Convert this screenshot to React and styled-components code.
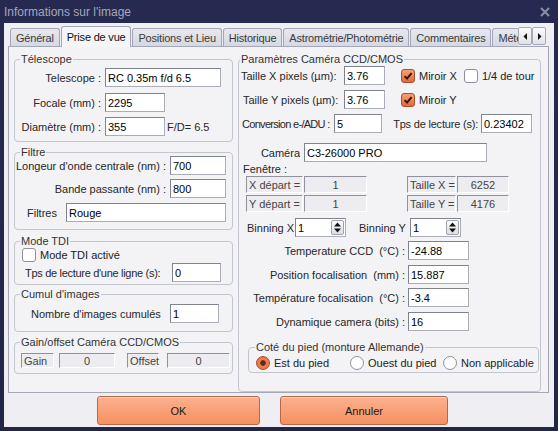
import React from 'react';
import styled, { createGlobalStyle } from 'styled-components';

const FONT = '"Liberation Sans", Arial, sans-serif';

const GlobalStyle = createGlobalStyle`
  * { box-sizing: border-box; }
  html, body { margin: 0; padding: 0; background: #24274c; }
  body { font-family: ${FONT}; font-size: 11px; color: #1e1e1e; }
`;

const Window = styled.div`
  width: 558px;
  height: 431px;
  display: flex;
  flex-direction: column;
  padding: 0 4px 4px;
  background: linear-gradient(180deg, #262a50 0%, #22254a 100%);
`;

const TitleBar = styled.div`
  height: 23px;
  flex-shrink: 0;
  display: flex;
  align-items: center;
  justify-content: space-between;
  padding-right: 4px;
`;

const Title = styled.span`
  font-size: 12px;
  color: #a5a7bf;
`;

const Client = styled.div`
  flex: 1;
  display: flex;
  flex-direction: column;
  padding: 2px 5px 2px 4px;
  background: #efeff3;
`;

const TabStrip = styled.div`
  height: 21px;
  flex-shrink: 0;
  display: flex;
`;

const TabList = styled.div`
  flex: 1;
  height: 22px;
  margin-bottom: -1px;
  padding-left: 2px;
  display: flex;
  align-items: flex-end;
  gap: 1px;
  overflow: hidden;
  position: relative;
  z-index: 1;
`;

const Tab = styled.div`
  flex-shrink: 0;
  height: ${p => (p.$active ? 21 : 18)}px;
  margin-bottom: ${p => (p.$active ? 0 : 1)}px;
  padding: 0 5px;
  display: flex;
  align-items: center;
  border: 1px solid #a2a6b6;
  border-bottom: none;
  border-radius: 3px 3px 0 0;
  background: ${p => (p.$active ? '#f5f5f8' : 'linear-gradient(180deg, #e7e8ef 0%, #d6d8e2 100%)')};
  color: ${p => (p.$active ? '#111' : '#3a3a3a')};
  letter-spacing: -0.2px;
  white-space: nowrap;
`;

const TabArrows = styled.div`
  align-self: flex-end;
  display: flex;
  margin: 0 3px 1px 0;
`;

const ArrowBtn = styled.span`
  width: 14px;
  height: 18px;
  display: flex;
  align-items: center;
  justify-content: center;
  border: 1px solid #a6aab8;
  border-radius: 2px;
  background: linear-gradient(180deg, #fafafc 0%, #e2e3ea 100%);
`;

const Panel = styled.div`
  height: 347px;
  flex-shrink: 0;
  display: flex;
  gap: 5px;
  padding: 12px 7px 0 5px;
  border: 1px solid #a3a7b6;
  background: #f3f3f6;
`;

const Column = styled.div`
  width: 219px;
  display: flex;
  flex-direction: column;
`;

const Group = styled.div`
  position: relative;
  flex-shrink: 0;
  width: ${p => (p.$w ? `${p.$w}px` : 'auto')};
  margin: ${p => p.$m || '0'};
  padding: ${p => p.$pad};
  border: 1px solid #c3c5cf;
  border-radius: 4px;
`;

const Legend = styled.span`
  position: absolute;
  top: -7px;
  left: ${p => p.$l ?? 5}px;
  padding: 0 1px;
  line-height: 13px;
  background: #f3f3f6;
  color: #333;
  white-space: nowrap;
`;

const Row = styled.div`
  display: flex;
  align-items: center;
  height: ${p => p.$h || 19}px;
  margin-top: ${p => p.$mt || 0}px;
  padding-left: ${p => p.$pl || 0}px;
`;

const Label = styled.span`
  flex-shrink: 0;
  width: ${p => (p.$w ? `${p.$w}px` : 'auto')};
  margin-left: ${p => p.$ml || 0}px;
  padding-left: ${p => p.$pl || 0}px;
  padding-right: ${p => p.$pr || 0}px;
  text-align: ${p => p.$align || 'right'};
  letter-spacing: ${p => p.$ls || 0}px;
  white-space: pre;
  color: #272727;
`;

const Field = styled.input.attrs({ type: 'text', readOnly: true })`
  flex-shrink: 0;
  width: ${p => p.$w}px;
  height: 19px;
  margin: 0 0 0 ${p => p.$ml || 0}px;
  padding: 0 2px;
  border: 1px solid #7e838f;
  border-right-color: #a9adb7;
  border-bottom-color: #a9adb7;
  background: #fff;
  font: 11px ${FONT};
  color: #000;
  outline: none;
`;

const Sunken = styled.div`
  flex-shrink: 0;
  width: ${p => p.$w}px;
  height: ${p => p.$h || 17}px;
  margin-left: ${p => p.$ml || 0}px;
  padding: 0 2px;
  display: flex;
  align-items: center;
  justify-content: ${p => (p.$center ? 'center' : 'flex-start')};
  border: 1px solid;
  border-color: #8f929c #ffffff #ffffff #8f929c;
  background: #ededf1;
  color: #444;
  white-space: nowrap;
`;

const CheckItem = styled.span`
  display: flex;
  align-items: center;
  gap: 4px;
  margin-left: ${p => p.$ml || 0}px;
  color: #222;
  white-space: nowrap;
`;

const Box = styled.span`
  width: 14px;
  height: 14px;
  flex-shrink: 0;
  display: flex;
  align-items: center;
  justify-content: center;
  border-radius: 3px;
  border: 1px solid ${p => (p.$on ? '#a9522f' : '#8d919d')};
  background: ${p => (p.$on ? 'linear-gradient(180deg, #f7a071 0%, #e2693d 100%)' : '#fff')};
`;

const Options = styled.div`
  display: flex;
  align-items: center;
  height: 15px;
`;

const Option = styled.span`
  width: ${p => (p.$w ? `${p.$w}px` : 'auto')};
  display: flex;
  align-items: center;
  gap: 4px;
  white-space: nowrap;
  color: #222;
`;

const Radio = styled.span`
  width: 14px;
  height: 14px;
  flex-shrink: 0;
  border-radius: 50%;
  border: 1px solid ${p => (p.$on ? '#a4502f' : '#8d919d')};
  background: ${p => (p.$on ? 'radial-gradient(circle, #6b2811 0 2.4px, #ef8456 3.2px, #df683c 100%)' : '#fff')};
`;

const Spin = styled.div`
  flex-shrink: 0;
  width: 51px;
  height: 19px;
  margin-left: ${p => p.$ml || 0}px;
  padding: 0 1px 0 2px;
  display: flex;
  align-items: center;
  border: 1px solid #7e838f;
  border-right-color: #a9adb7;
  border-bottom-color: #a9adb7;
  background: #fff;
  color: #000;
`;

const SpinValue = styled.span`
  flex: 1;
`;

const SpinButton = styled.span`
  width: 13px;
  height: 15px;
  display: flex;
  align-items: center;
  justify-content: center;
  border: 1px solid #9ea2ad;
  border-radius: 2px;
  background: linear-gradient(180deg, #fbfbfc 0%, #dcdee4 100%);
`;

const ButtonRow = styled.div`
  height: 29px;
  flex-shrink: 0;
  margin-top: 3px;
  padding-left: 89px;
  display: flex;
  gap: 20px;
`;

const Button = styled.button`
  width: ${p => p.$w}px;
  height: 29px;
  padding: 0;
  border: 1px solid #b8684a;
  border-radius: 3px;
  background: linear-gradient(180deg, #fcb190 0%, #f6905f 100%);
  box-shadow: inset 0 1px 0 rgba(255, 255, 255, 0.45);
  font: 11px ${FONT};
  color: #1a1a1a;
`;

const CloseIcon = () => (
  <svg width="10" height="10" viewBox="0 0 10 10">
    <path d="M1 1 L9 9 M9 1 L1 9" stroke="#8b8da7" strokeWidth="2" />
  </svg>
);

const Arrow = ({ dir }) => (
  <svg width="5" height="7" viewBox="0 0 5 7">
    <polygon points={dir === 'left' ? '4,0 0.5,3.5 4,7' : '1,0 4.5,3.5 1,7'} fill="#111" />
  </svg>
);

const SpinArrows = () => (
  <svg width="9" height="13" viewBox="0 0 9 13">
    <polygon points="1,5.5 8,5.5 4.5,1.5" fill="#111" />
    <polygon points="1,7.5 8,7.5 4.5,11.5" fill="#111" />
  </svg>
);

const CheckBox = ({ on }) => (
  <Box $on={on}>
    {on && (
      <svg width="10" height="10" viewBox="0 0 10 10">
        <path d="M1.6 5.2 L4 7.6 L8.6 2.2" stroke="#2e160b" strokeWidth="1.9" fill="none" />
      </svg>
    )}
  </Box>
);

const SpinBox = ({ value, ml }) => (
  <Spin $ml={ml}>
    <SpinValue>{value}</SpinValue>
    <SpinButton><SpinArrows /></SpinButton>
  </Spin>
);

const tabs = ['Général', 'Prise de vue', 'Positions et Lieu', 'Historique', 'Astrométrie/Photométrie', 'Commentaires', 'Météo'];

const focusRows = [
  ['Temperature CCD  (°C) :', '-24.88', 4],
  ['Position focalisation  (mm) :', '15.887', 5],
  ['Température focalisation  (°C) :', '-3.4', 4],
  ['Dynamique camera (bits) :', '16', 5],
];

export default function App() {
  return (
    <Window>
      <GlobalStyle />
      <TitleBar>
        <Title>Informations sur l'image</Title>
        <CloseIcon />
      </TitleBar>
      <Client>
        <TabStrip>
          <TabList>
            {tabs.map(t => (
              <Tab key={t} $active={t === 'Prise de vue'}>{t}</Tab>
            ))}
          </TabList>
          <TabArrows>
            <ArrowBtn><Arrow dir="left" /></ArrowBtn>
            <ArrowBtn><Arrow dir="right" /></ArrowBtn>
          </TabArrows>
        </TabStrip>

        <Panel>
          <Column>
            <Group $pad="8px 0 5px 0">
              <Legend>Télescope</Legend>
              <Row>
                <Label $w={86}>Telescope :</Label>
                <Field $ml={4} $w={116} value="RC 0.35m f/d 6.5" />
              </Row>
              <Row $mt={6}>
                <Label $w={86}>Focale (mm) :</Label>
                <Field $ml={4} $w={60} value="2295" />
              </Row>
              <Row $mt={5}>
                <Label $w={86}>Diamètre (mm) :</Label>
                <Field $ml={4} $w={60} value="355" />
                <Label $ml={2} $align="left">F/D= 6.5</Label>
              </Row>
            </Group>

            <Group $m="10px 0 0" $pad="3px 0 7px 0">
              <Legend>Filtre</Legend>
              <Row>
                <Label $w={151}>Longeur d'onde centrale (nm) :</Label>
                <Field $ml={4} $w={56} value="700" />
              </Row>
              <Row $mt={4}>
                <Label $w={151}>Bande passante (nm) :</Label>
                <Field $ml={4} $w={56} value="800" />
              </Row>
              <Row $mt={5}>
                <Label $w={51} $pl={12} $align="left">Filtres</Label>
                <Field $w={160} value="Rouge" />
              </Row>
            </Group>

            <Group $m="11px 0 0" $pad="5px 0 2px 0">
              <Legend>Mode TDI</Legend>
              <Row $h={15} $pl={7}>
                <CheckItem>
                  <CheckBox />
                  <span>Mode TDI activé</span>
                </CheckItem>
              </Row>
              <Row $mt={1}>
                <Label $w={157} $pl={10} $align="left" $ls={-0.3}>Tps de lecture d'une ligne (s):</Label>
                <Field $w={49} value="0" />
              </Row>
            </Group>

            <Group $m="9px 0 0" $pad="9px 0 8px 0">
              <Legend>Cumul d'images</Legend>
              <Row>
                <Label $w={155} $pl={16} $align="left">Nombre d'images cumulés</Label>
                <Field $w={49} value="1" />
              </Row>
            </Group>

            <Group $m="10px 0 0" $pad="10px 0 5px 0">
              <Legend>Gain/offset Caméra CCD/CMOS</Legend>
              <Row $h={15} $pl={6}>
                <Sunken $w={33} $h={15}>Gain</Sunken>
                <Sunken $w={56} $h={15} $ml={5} $center>0</Sunken>
                <Sunken $w={32} $h={15} $ml={12}>Offset</Sunken>
                <Sunken $w={63} $h={15} $ml={8} $center>0</Sunken>
              </Row>
            </Group>
          </Column>

          <Group $w={303} $pad="6px 0 4px 0">
            <Legend $l={1}>Paramètres Caméra CCD/CMOS</Legend>
            <Row>
              <Label $w={105} $pl={2} $align="left">Taille X pixels (µm):</Label>
              <Field $w={41} value="3.76" />
              <CheckItem $ml={16}><CheckBox on /><span>Miroir X</span></CheckItem>
              <CheckItem $ml={7}><CheckBox /><span>1/4 de tour</span></CheckItem>
            </Row>
            <Row $mt={5}>
              <Label $w={105} $pl={4} $align="left">Taille Y pixels (µm):</Label>
              <Field $w={41} value="3.76" />
              <CheckItem $ml={16}><CheckBox on /><span>Miroir Y</span></CheckItem>
            </Row>
            <Row $mt={5}>
              <Label $w={95} $pl={3} $align="left" $ls={-0.7}>Conversion e-/ADU :</Label>
              <Field $w={48} value="5" />
              <Label $w={99} $pr={3} $ls={-0.2}>Tps de lecture (s):</Label>
              <Field $w={51} value="0.23402" />
            </Row>
            <Row $mt={10}>
              <Label $w={65} $pr={4}>Caméra</Label>
              <Field $w={183} value="C3-26000 PRO" />
            </Row>
            <Row $h={12} $mt={1}>
              <Label $pl={4} $align="left">Fenêtre :</Label>
            </Row>
            <Row $h={17} $mt={1} $pl={7}>
              <Sunken $w={57}>X départ =</Sunken>
              <Sunken $w={63} $ml={1} $center>1</Sunken>
              <Sunken $w={49} $ml={40}>Taille X =</Sunken>
              <Sunken $w={52} $ml={1} $center>6252</Sunken>
            </Row>
            <Row $h={17} $mt={2} $pl={7}>
              <Sunken $w={57}>Y départ =</Sunken>
              <Sunken $w={63} $ml={1} $center>1</Sunken>
              <Sunken $w={49} $ml={40}>Taille Y =</Sunken>
              <Sunken $w={52} $ml={1} $center>4176</Sunken>
            </Row>
            <Row $mt={6} $pl={8}>
              <Label $w={47} $align="left">Binning X</Label>
              <SpinBox value="1" ml={1} />
              <Label $w={50} $ml={13} $align="left">Binning Y</Label>
              <SpinBox value="1" ml={1} />
            </Row>
            {focusRows.map(([label, value, mt]) => (
              <Row key={label} $mt={mt}>
                <Label $w={166}>{label}</Label>
                <Field $ml={3} $w={61} value={value} />
              </Row>
            ))}
            <Group $m="16px 1px 0 9px" $pad="7px 0 2px 7px">
              <Legend $l={6}>Coté du pied (monture Allemande)</Legend>
              <Options>
                <Option $w={94}><Radio $on /><span>Est du pied</span></Option>
                <Option $w={93}><Radio /><span>Ouest du pied</span></Option>
                <Option><Radio /><span>Non applicable</span></Option>
              </Options>
            </Group>
          </Group>
        </Panel>

        <ButtonRow>
          <Button $w={163}>OK</Button>
          <Button $w={168}>Annuler</Button>
        </ButtonRow>
      </Client>
    </Window>
  );
}
